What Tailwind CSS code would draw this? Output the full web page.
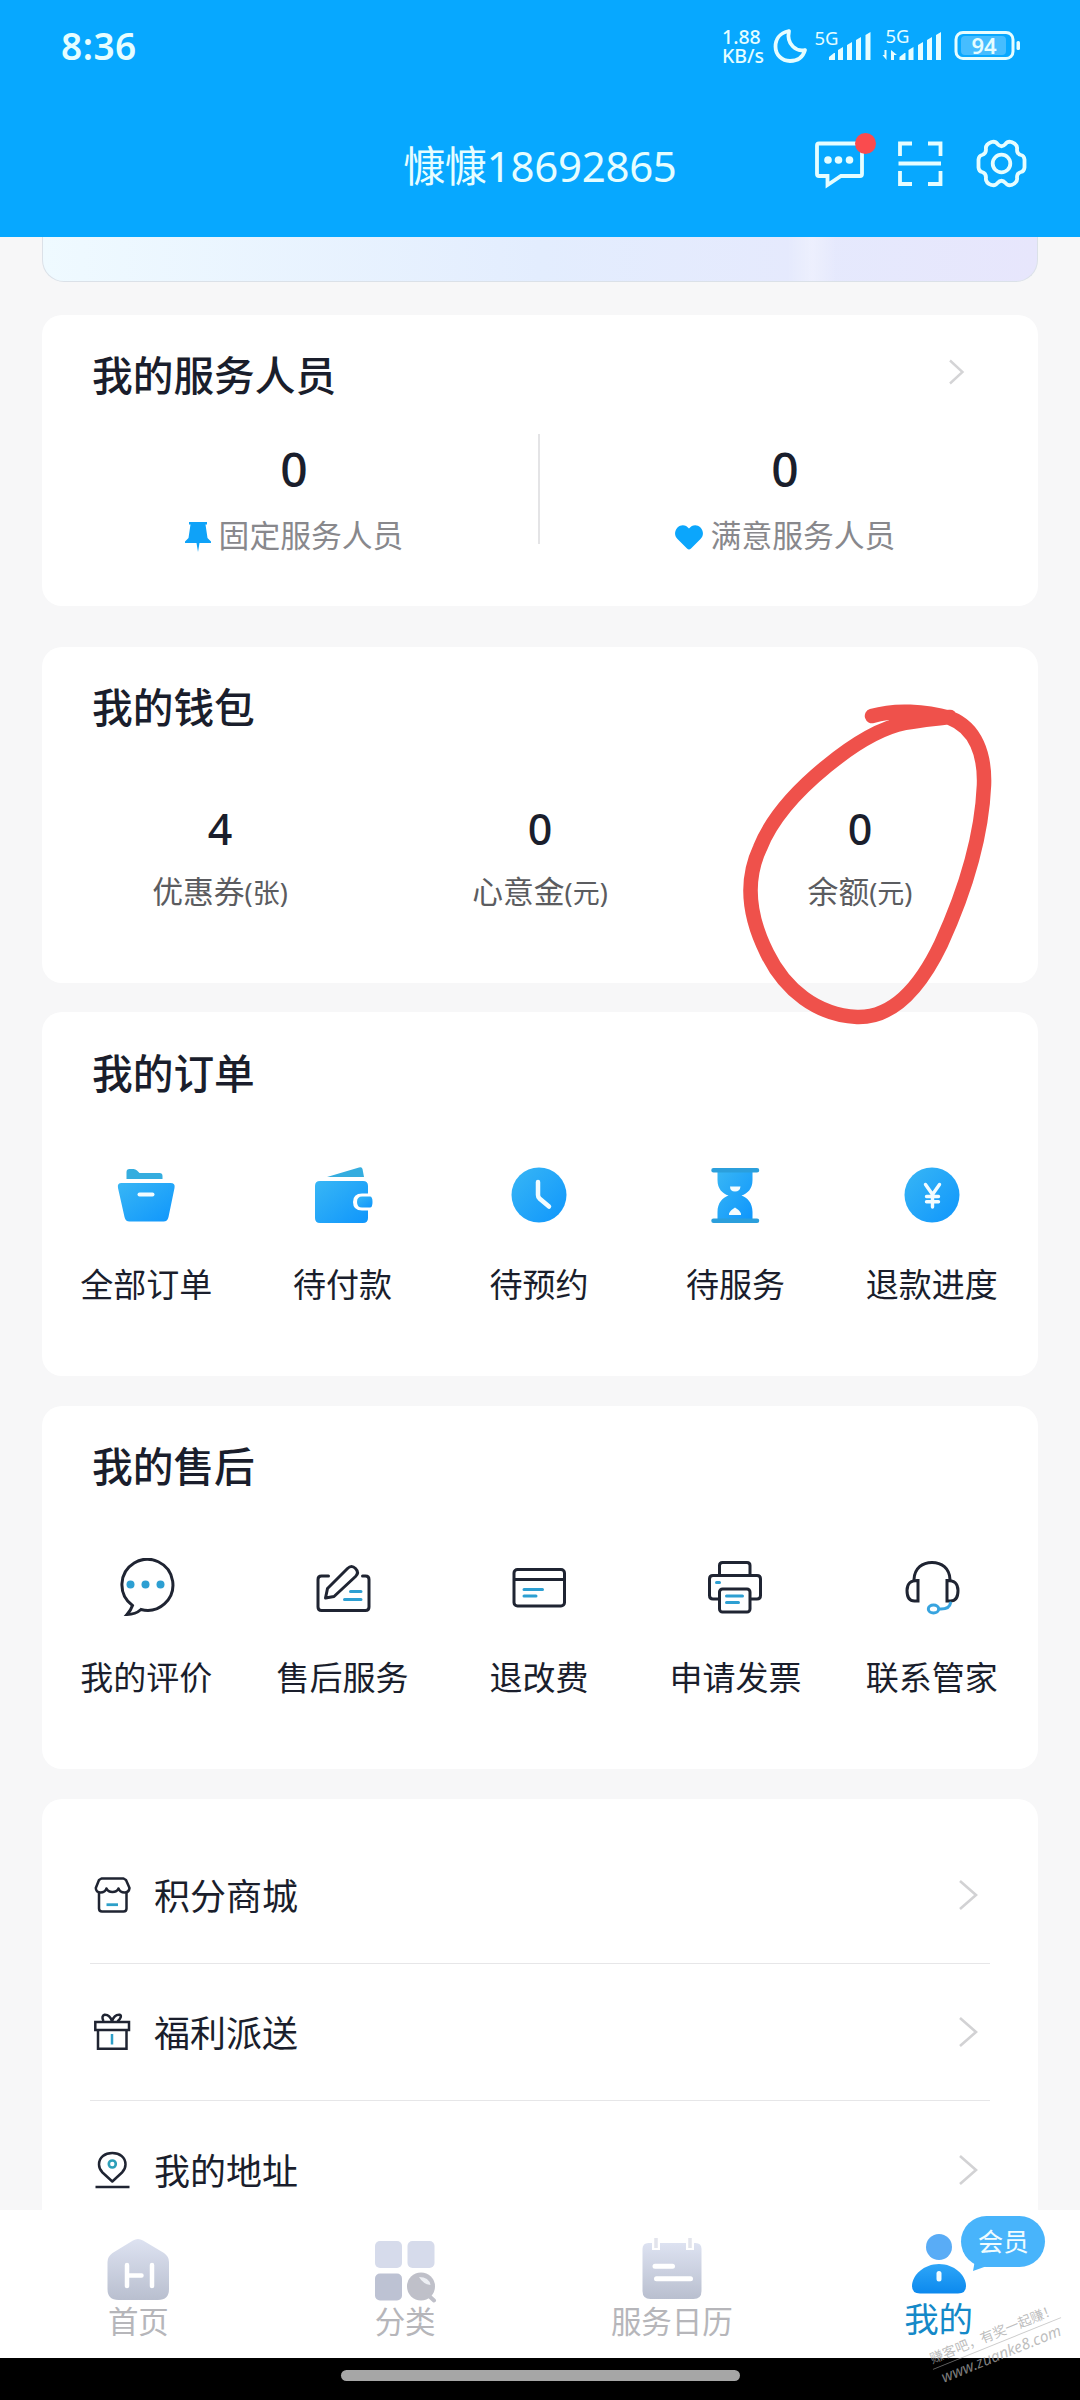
<!DOCTYPE html>
<html lang="zh-CN">
<head>
<meta charset="utf-8">
<title>我的</title>
<script src="https://cdn.jsdelivr.net/npm/@tailwindcss/browser@4"></script>
</head>
<body class="font-['Noto_Sans','Noto_Sans_CJK_SC',sans-serif]">
<svg class="absolute size-0" aria-hidden="true">
  <defs>
    <linearGradient id="blue" x1="0" y1="0" x2="1" y2="1"><stop offset="0" stop-color="#38b6f5"/><stop offset="1" stop-color="#0f96fc"/></linearGradient>
    <linearGradient id="gray" x1="0" y1="0" x2="0" y2="1"><stop offset="0" stop-color="#dde2f1"/><stop offset="1" stop-color="#b9bfcf"/></linearGradient>
    <linearGradient id="user" x1="0" y1="0" x2="0" y2="1"><stop offset="0" stop-color="#2ea6f8"/><stop offset="1" stop-color="#0c89ee"/></linearGradient>
  </defs>
</svg>
<div class="relative flex h-[2400px] w-[1080px] flex-col overflow-hidden bg-[#f7f7f8] text-[#1a1e2c]">

  <!-- Header -->
  <header class="flex h-[237px] shrink-0 flex-col bg-[#07a8ff] text-[#e6fdff]">
    <div class="flex h-[92px] items-center justify-between pl-[61px] pr-[59px]">
      <div class="pb-[2px] text-[37px] font-semibold leading-none tracking-[0.5px]">8:36</div>
      <div class="flex h-[40px] items-center">
        <div class="w-[51px] text-[19.5px] font-medium leading-[19px]"><div>1.88</div><div>KB/s</div></div>
        <svg class="h-[60px] w-[248px]" viewBox="773 16 248 60" fill="none" stroke="#e6fdff">
          <path d="M789 31C779 33 775.500 40 775.500 46.500C775.500 55 782 61 790 61C797.500 61 803 57 805 50C797 52 786 45 789 31Z" stroke-width="3.800" stroke-linejoin="round"/>
          <g fill="#e6fdff" stroke="none">
            <path d="M829 60v-3l5-4h1v7zM838 60V50l5-3v13zM847 60V45l5-3v18zM856 60V40l5-3v23zM865.500 60V35l5-3v28z"/>
            <path d="M899.500 60v-3l5-4h1v7zM908.500 60V50l5-3v13zM918 60V45l5-3v18zM927 60V40l5-3v23zM936 60V35l5-3v28z"/>
            <path d="M886.500 50v10l-4-5h2v-5zM891 60V50l6 5h-3v5z"/>
            <text x="814.500" y="44.500" font-size="18.500">5G</text>
            <text x="885.500" y="43" font-size="18.500">5G</text>
            <rect x="961" y="36" width="45" height="19" rx="4" fill="#46bdff"/>
            <rect x="1016.500" y="41" width="3.500" height="9" rx="1.500"/>
            <text x="984" y="54" font-size="22" font-weight="600" text-anchor="middle">94</text>
          </g>
          <rect x="956" y="32.500" width="57" height="26" rx="7" stroke-width="3"/>
        </svg>
      </div>
    </div>
    <div class="grid h-[145px] grid-cols-[1fr_auto_1fr] items-start">
      <div></div>
      <h1 class="pt-[48px] text-[42px] leading-[52px] tracking-[-0.3px]">慷慷18692865</h1>
      <div class="flex justify-end pr-[50px] pt-[38px]">
        <svg class="h-[64px] w-[220px]" viewBox="810 130 220 64" fill="none" stroke="#e6fdff" stroke-width="3.800">
          <path d="M819 143.500H860q2 0 2 2V174q0 2-2 2H841L827.500 185V176H819q-2 0-2-2V145.500q0-2 2-2Z"/>
          <g fill="#e6fdff" stroke="none"><circle cx="828" cy="160" r="3.800"/><circle cx="838.500" cy="160" r="3.800"/><circle cx="849.500" cy="160" r="3.800"/></g>
          <circle cx="865.500" cy="143.500" r="10.500" fill="#fa4b4e" stroke="none"/>
          <path d="M900 156V143.500H912M928 143.500H940.500V156M900 171V184H912M928 184H940.500V171M898.500 163.500H941"/>
          <circle cx="1001.500" cy="163.500" r="8.800"/>
          <path stroke-linejoin="round" d="M991.500 142Q995.500 141 997.500 144Q1001.500 148.500 1005.500 144Q1007.500 141 1011.500 142Q1018 144.500 1017 149.500Q1017 154 1021 155Q1024 155.500 1024.500 159.500V167.500Q1024 171.500 1021 172Q1017 173 1017 177.500Q1018 182.500 1011.500 185Q1007.500 186 1005.500 183Q1001.500 178.500 997.500 183Q995.500 186 991.500 185Q985 182.500 986 177.500Q986 173 982 172Q979 171.500 978.500 167.500V159.500Q979 155.500 982 155Q986 154 986 149.500Q985 144.500 991.500 142Z"/>
        </svg>
      </div>
    </div>
  </header>

  <!-- Scrolling content -->
  <main class="h-[1973px] shrink-0 overflow-hidden px-[42px]">
    <div class="h-[45px] rounded-b-[22px] border border-t-0 border-[#dbe1e8] bg-linear-to-r from-[#effaff] via-[#e3edfe] to-[#e7e6fc]">
      <div class="ml-[744px] h-full w-[50px] bg-linear-to-r from-white/0 via-white/30 to-white/0"></div>
    </div>

    <section class="mt-[33px] h-[291px] rounded-[20px] bg-white px-[6px]">
      <div class="flex items-center justify-between pl-[44px] pr-[66px] pt-[35px]">
        <h2 class="text-[40.7px] font-medium leading-[50px]">我的服务人员</h2>
        <svg class="mb-[6px] h-[28px] w-[20px]" viewBox="0 0 20 28" fill="none" stroke="#d4d4d6" stroke-width="2.400"><path d="M4 2.500L16.500 14L4 25.500"/></svg>
      </div>
      <div class="grid grid-cols-2 pt-[34px]">
        <div class="flex h-[110px] flex-col items-center border-r-2 border-[#e4e4e6] pl-[2px]">
          <div class="mt-[11px] text-[48px] font-medium leading-[48px]">0</div>
          <div class="mt-[22px] flex items-center whitespace-nowrap text-[30.8px] leading-[40px] text-[#88888c]">
            <svg class="mr-[8px] mt-[3px] h-[30px] w-[26px]" viewBox="0 0 26 30"><path d="M4 0H22V2.500H20.500L22.500 16L26 19.500V21H14.500L13 30L11.500 21H0V19.500L3.500 16L5.500 2.500H4Z" fill="#0fa2f8"/></svg>固定服务人员
          </div>
        </div>
        <div class="flex flex-col items-center pr-[2px]">
          <div class="mt-[11px] text-[48px] font-medium leading-[48px]">0</div>
          <div class="mt-[22px] flex items-center whitespace-nowrap text-[30.8px] leading-[40px] text-[#88888c]">
            <svg class="mr-[8px] mt-[4px] h-[25px] w-[28px]" viewBox="0 0 28 25"><path d="M14 3.500C17-.5 22-1 25.500 2.500C29 6.500 28.500 11 25.500 14L16 23.500Q14 25.500 12 23.500L2.500 14C-.5 11-1 6.500 2.500 2.500C6-1 11-.5 14 3.500Z" fill="#0ba6fc"/></svg>满意服务人员
          </div>
        </div>
      </div>
    </section>

    <section class="mt-[41px] h-[336px] rounded-[20px] bg-white px-[18px]">
      <h2 class="pl-[32px] pt-[35px] text-[40.7px] font-medium leading-[50px]">我的钱包</h2>
      <div class="grid grid-cols-3 pt-[75px] text-center">
        <div><div class="text-[43px] font-medium leading-[44px]">4</div><div class="mt-[20px] text-[30.8px] leading-[40px] text-[#5b5c60]">优惠券<span class="text-[27px]">(张)</span></div></div>
        <div><div class="text-[43px] font-medium leading-[44px]">0</div><div class="mt-[20px] text-[30.8px] leading-[40px] text-[#5b5c60]">心意金<span class="text-[27px]">(元)</span></div></div>
        <div><div class="text-[43px] font-medium leading-[44px]">0</div><div class="mt-[20px] text-[30.8px] leading-[40px] text-[#5b5c60]">余额<span class="text-[27px]">(元)</span></div></div>
      </div>
    </section>

    <section class="mt-[29px] h-[364px] rounded-[20px] bg-white pl-[6px] pr-[8px]">
      <h2 class="pl-[44px] pt-[36px] text-[40.7px] font-medium leading-[50px]">我的订单</h2>
      <div class="grid grid-cols-5 pt-[67px] text-[33px] leading-[44px]">
        <div class="flex flex-col items-center gap-[38px]">
          <svg class="size-[60px]" viewBox="116.500 1164 60 60" fill="url(#blue)"><path d="M127 1178V1171q0-3 3-3h4q2 0 3.500 1.500l2.500 2.500h20q3 0 3 3v3z" fill="#35addf"/><path d="M122 1182H171q5 0 4 5L169 1216q-1 4.500-5 4.500H130q-4 0-5-4.500L118.500 1187q-1-5 3.500-5Z"/><path d="M140 1193.500H153" stroke="#f2fcff" stroke-width="4" stroke-linecap="round"/></svg>
          <div>全部订单</div>
        </div>
        <div class="flex flex-col items-center gap-[38px]">
          <svg class="size-[60px]" viewBox="313 1164 60 60" fill="url(#blue)"><path d="M327 1176L359 1166.500q3-1 3.500 1.500L364 1176Z" fill="#35addf"/><path d="M320 1180H363q5 0 5 5V1192.500H362q-9 0-9 8.500t9 8.500H368V1217q0 5-5 5H320q-5 0-5-5V1185q0-5 5-5Z"/><path d="M362 1195.500H370q2.500 0 2.500 5.500t-2.500 5.500H362q-5 0-5-5.500t5-5.500Z"/></svg>
          <div>待付款</div>
        </div>
        <div class="flex flex-col items-center gap-[38px]">
          <svg class="size-[60px]" viewBox="509.500 1164 60 60" fill="url(#blue)"><circle cx="539.500" cy="1194" r="27.500"/><path d="M538.500 1181V1194Q538.500 1196 540 1197.500L549.500 1205.500" fill="none" stroke="#f2fcff" stroke-width="4.500" stroke-linecap="round"/></svg>
          <div>待预约</div>
        </div>
        <div class="flex flex-col items-center gap-[38px]">
          <svg class="size-[60px]" viewBox="705.500 1164 60 60" fill="url(#blue)"><path d="M718 1170H753V1179C753 1188 748 1192.500 742 1194.500C748 1196.500 753 1202 753 1211V1218H718V1211C718 1202 723 1196.500 729 1194.500C723 1192.500 718 1188 718 1179Z"/><path d="M714 1169.200H757.500M714 1219.700H757.500" stroke="#2b9fdc" stroke-width="4.500" stroke-linecap="round"/><path d="M730.500 1185.500H741Q740.500 1190.500 735.500 1190.500T730.500 1185.500ZM729.500 1214Q728.500 1211 735.500 1206.500Q742.500 1211 741.500 1214Z" fill="#f2fcff"/></svg>
          <div>待服务</div>
        </div>
        <div class="flex flex-col items-center gap-[38px]">
          <svg class="size-[60px]" viewBox="902 1164 60 60" fill="url(#blue)"><circle cx="932" cy="1194" r="27.500"/><path d="M925.500 1183.500L932.500 1193.500L939.500 1183.500M932.500 1193.500V1206M926.500 1195.500H938.500M926.500 1200.700H938.500" fill="none" stroke="#f2fcff" stroke-width="3.400" stroke-linecap="round"/></svg>
          <div>退款进度</div>
        </div>
      </div>
    </section>

    <section class="mt-[30px] h-[363px] rounded-[20px] bg-white pl-[6px] pr-[8px]">
      <h2 class="pl-[44px] pt-[35px] text-[40.7px] font-medium leading-[50px]">我的售后</h2>
      <div class="grid grid-cols-5 pt-[67px] text-[33px] leading-[44px]">
        <div class="flex flex-col items-center gap-[38px]">
          <svg class="size-[60px]" viewBox="117.500 1558 60 60" fill="none" stroke="#1f2432" stroke-width="3"><path d="M134 1605.500A25.500 25.500 0 1 1 142.500 1609.500Q137 1614.500 128.500 1614.500Q132.500 1610 134 1605.500Z"/><g fill="#2d9fd2" stroke="none"><circle cx="132" cy="1584.500" r="4"/><circle cx="147" cy="1584.500" r="4"/><circle cx="162" cy="1584.500" r="4"/></g></svg>
          <div>我的评价</div>
        </div>
        <div class="flex flex-col items-center gap-[38px]">
          <svg class="size-[60px]" viewBox="313.500 1557 60 60" fill="none" stroke="#1f2432" stroke-width="3" stroke-linecap="round" stroke-linejoin="round"><path d="M329 1575H322q-3.500 0-3.500 3.500V1606q0 3.500 3.500 3.500H366q3.500 0 3.500-3.500V1578.500q0-3.500-3.500-3.500H363"/><path d="M326 1597L328 1587.500L348 1567.500Q352 1563.500 356 1567.500T356 1575.500L334.500 1595.500Z"/><path d="M351 1590.500H361.500M345 1598.500H361.500" stroke="#2d9fd2"/></svg>
          <div>售后服务</div>
        </div>
        <div class="flex flex-col items-center gap-[38px]">
          <svg class="size-[60px]" viewBox="509.500 1558 60 60" fill="none" stroke="#1f2432" stroke-width="3" stroke-linecap="round"><rect x="514.500" y="1569.500" width="50.500" height="36.500" rx="3.500"/><path d="M515 1579.500H564"/><path d="M524.500 1589.500H543M524.500 1596H536.500" stroke="#2d9fd2"/></svg>
          <div>退改费</div>
        </div>
        <div class="flex flex-col items-center gap-[38px]">
          <svg class="size-[60px]" viewBox="706 1558 60 60" fill="none" stroke="#1f2432" stroke-width="3" stroke-linecap="round"><path d="M720.500 1575V1565.500q0-3 3-3H748q3 0 3 3V1575M720 1599H714q-3.500 0-3.500-3.500V1579q0-3.500 3.500-3.500H758q3.500 0 3.500 3.500V1595.500q0 3.500-3.500 3.500H752"/><rect x="720.500" y="1589" width="30.500" height="23" rx="3"/><path d="M717.500 1582.500H720.500M727.500 1596H743.500M727.500 1602.500H739.500" stroke="#2d9fd2"/></svg>
          <div>申请发票</div>
        </div>
        <div class="flex flex-col items-center gap-[38px]">
          <svg class="size-[60px]" viewBox="902.500 1558 60 60" fill="none" stroke="#1f2432" stroke-width="3" stroke-linecap="round"><path d="M914.500 1579.500C915 1568 923 1562.500 932.500 1562.500S950 1568 950.500 1579.500"/><path d="M918.500 1600V1580.500Q907.500 1580 907.500 1590.500T915 1601H918.500ZM947.500 1600V1580.500Q958.500 1580 958.500 1590.500T951 1601H947.500Z"/><path d="M951 1603Q950 1609.500 940 1609" stroke="#38a4df"/><ellipse cx="934" cy="1609" rx="5.200" ry="4" stroke="#38a4df"/></svg>
          <div>联系管家</div>
        </div>
      </div>
    </section>

    <section class="mt-[30px] h-[460px] rounded-t-[20px] bg-white px-[48px] pt-[28px] text-[36px]">
      <div class="flex h-[137px] items-center border-b border-[#e6e6e8]">
        <svg class="ml-[2px] size-[40px]" viewBox="92 1875 40 40" fill="none" stroke="#1f2432" stroke-width="2.500"><path d="M101.500 1878.500H123.500L126 1880L129.500 1888Q129 1892.500 124.500 1892.500Q120 1892.500 118.500 1888.500Q117 1892 112.500 1892T106.500 1888.500Q105 1892.500 100.500 1892.500Q96 1892.500 95.800 1888L99 1880Z" stroke-linejoin="round"/><path d="M99 1893V1908.500q0 3 3 3H123.500q3 0 3-3V1893"/><path d="M106.500 1904.700H118" stroke="#2d9fc8" stroke-width="2.800"/></svg>
        <div class="ml-[22px] grow pt-[4px]">积分商城</div>
        <svg class="mr-[10px] h-[32px] w-[22px]" viewBox="0 0 22 32" fill="none" stroke="#d2d2d4" stroke-width="2.600"><path d="M2 2L18 16L2 30"/></svg>
      </div>
      <div class="flex h-[137px] items-center border-b border-[#e6e6e8]">
        <svg class="ml-[2px] size-[40px]" viewBox="92 2012 40 40" fill="none" stroke="#1f2432" stroke-width="2.500"><path d="M95.300 2022H129V2030H95.300ZM98 2030V2048.800H126.500V2030"/><path d="M112 2021.500Q110 2014.500 104.500 2014.800Q101 2016 103.500 2021M112 2021.500Q114 2014.500 119.500 2014.800Q123 2016 117.500 2021.500"/><path d="M112 2034V2044.500" stroke="#2d9fc8"/></svg>
        <div class="ml-[22px] grow pt-[4px]">福利派送</div>
        <svg class="mr-[10px] h-[32px] w-[22px]" viewBox="0 0 22 32" fill="none" stroke="#d2d2d4" stroke-width="2.600"><path d="M2 2L18 16L2 30"/></svg>
      </div>
      <div class="flex h-[137px] items-center">
        <svg class="ml-[2px] size-[40px]" viewBox="92 2149 40 40" fill="none" stroke="#1f2432" stroke-width="2.500"><path d="M112.300 2180.500L102.500 2171.500Q99 2168 99 2163.500C99 2156 105 2152 112.300 2152S125.500 2156 125.500 2163.500Q125.500 2168 122 2171.500ZM95.500 2186H129.500" stroke-linejoin="round"/><circle cx="112.300" cy="2163" r="3.500" stroke="#2d9fb8" stroke-width="2.600"/></svg>
        <div class="ml-[22px] grow pt-[4px]">我的地址</div>
        <svg class="mr-[10px] h-[32px] w-[22px]" viewBox="0 0 22 32" fill="none" stroke="#d2d2d4" stroke-width="2.600"><path d="M2 2L18 16L2 30"/></svg>
      </div>
    </section>
  </main>

  <!-- Tab bar -->
  <nav class="grid h-[148px] shrink-0 grid-cols-4 bg-white pl-[5px] pr-[8px] text-[30.5px] leading-[36px] text-[#b6b6ba]">
    <div class="flex flex-col items-center pt-[23px]">
      <svg class="size-[70px]" viewBox="104 2232 70 70"><path d="M134 2239.500Q139 2236.500 144 2239.500L165 2252Q170 2255.500 170 2261V2288Q170 2299 159 2299H119.500Q108.500 2299 108.500 2288V2261Q108.500 2255.500 113.500 2252Z" fill="url(#gray)"/><path d="M128 2264V2285M128 2274.500H142.500M153 2264V2285" stroke="#fff" stroke-width="4.500" stroke-linecap="round" fill="none"/></svg>
      <div>首页</div>
    </div>
    <div class="flex flex-col items-center pt-[23px]">
      <svg class="size-[70px]" viewBox="372 2232 70 70"><g fill="#d6dbeb"><rect x="377" y="2240" width="27" height="27" rx="5"/><rect x="409.500" y="2240" width="27" height="27" rx="5"/></g><rect x="377" y="2272.500" width="27" height="27" rx="5" fill="#bdc2d3"/><circle cx="423" cy="2285.500" r="14" fill="#bfc0c9"/><path d="M430 2294L436 2299.500" stroke="#bfc0c9" stroke-width="4" stroke-linecap="round"/><path d="M421 2276Q431 2276 432.500 2284Q425 2283 421 2276Z" fill="#edeff4"/></svg>
      <div>分类</div>
    </div>
    <div class="flex flex-col items-center pt-[23px]">
      <svg class="size-[70px]" viewBox="638.500 2232 70 70"><path d="M650 2242H697Q703 2242 703 2248V2290Q703 2298 695 2298H652Q644 2298 644 2290V2248Q644 2242 650 2242Z" fill="url(#gray)"/><path d="M657.500 2234V2249M691.500 2234V2249" stroke="#fff" stroke-width="8"/><path d="M657.500 2237V2247M691.500 2237V2247" stroke="#e2e4ec" stroke-width="3.500"/><path d="M656.500 2265.300H674M658 2277.700H692" stroke="#fff" stroke-width="5" stroke-linecap="round"/></svg>
      <div>服务日历</div>
    </div>
    <div class="relative flex flex-col items-center pt-[18px]">
      <svg class="size-[70px]" viewBox="905 2228 70 70"><circle cx="940" cy="2247" r="13" fill="#59acf6"/><path d="M940 2264C955 2264 967 2275 967 2286Q967 2293.500 959 2293.500H921Q913 2293.500 913 2286C913 2275 925 2264 940 2264Z" fill="url(#user)"/><path d="M940 2273.500V2279" stroke="#f2fcff" stroke-width="5" stroke-linecap="round"/></svg>
      <div class="text-[34.5px] leading-[42px] text-[#1489c8]">我的</div>
      <div class="absolute left-[156px] top-[6px] flex h-[51px] w-[84px] items-center justify-center rounded-full bg-[#48b4fb] pb-[2px] text-[25.5px] text-[#f0fcff]">
        <svg class="absolute left-[11px] top-[44px] h-[11px] w-[16px]" viewBox="0 0 16 11"><path d="M3 0L1 11L15 6Z" fill="#48b4fb"/></svg>会员
      </div>
    </div>
  </nav>
  <footer class="flex h-[42px] shrink-0 justify-center bg-black pt-[12px]">
    <div class="h-[11px] w-[399px] rounded-full bg-[#a6a6a6]"></div>
  </footer>

  <!-- Hand-drawn mark and stamp over the page -->
  <svg class="pointer-events-none absolute left-[730px] top-[690px] h-[350px] w-[280px]" viewBox="730 690 280 350" fill="none" stroke="#ef514b" stroke-width="14.500" stroke-linecap="round" stroke-linejoin="round">
    <path d="M872 716C895 709 925 711 950 718C976 728 985 755 984 785C982 832 968 885 941 944C918 992 890 1018 857 1017C817 1015 785 990 767 953C748 915 745 880 760 848C773 815 800 788 827 766C855 743 880 728 905 723C920 720 935 719 950 717"/>
  </svg>
  <div class="absolute left-[928px] top-[2323px] w-[138px] origin-center rotate-[-22deg] text-center text-[#a8a8a8]/75">
    <div class="whitespace-nowrap border-b border-[#a8a8a8]/60 text-[13.5px] leading-[20px]">赚客吧，有奖一起赚！</div>
    <div class="text-[15.5px] italic leading-[20px]">www.zuanke8.com</div>
  </div>
</div>
</body>
</html>
